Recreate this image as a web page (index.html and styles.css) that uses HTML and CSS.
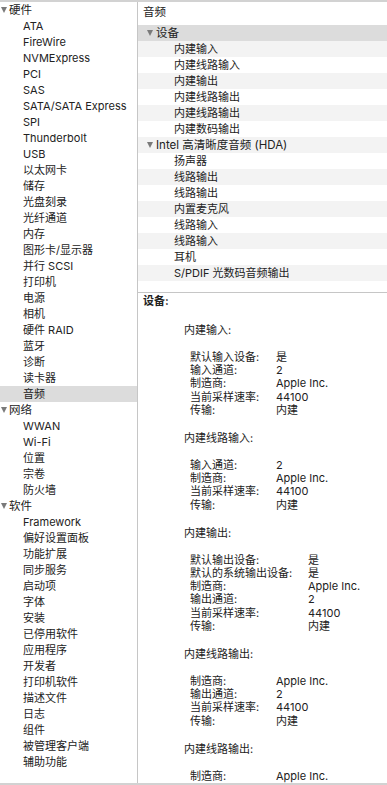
FILE: index.html
```html
<!DOCTYPE html>
<html lang="zh">
<head>
<meta charset="utf-8">
<title>系统信息</title>
<link rel="stylesheet" href="styles.css">
</head>
<body>
<div class="window">
  <nav class="sidebar">
    <div class="row group"><span class="tri"></span>硬件</div>
    <div class="row item">ATA</div>
    <div class="row item">FireWire</div>
    <div class="row item">NVMExpress</div>
    <div class="row item">PCI</div>
    <div class="row item">SAS</div>
    <div class="row item">SATA/SATA Express</div>
    <div class="row item">SPI</div>
    <div class="row item">Thunderbolt</div>
    <div class="row item">USB</div>
    <div class="row item">以太网卡</div>
    <div class="row item">储存</div>
    <div class="row item">光盘刻录</div>
    <div class="row item">光纤通道</div>
    <div class="row item">内存</div>
    <div class="row item">图形卡/显示器</div>
    <div class="row item">并行 SCSI</div>
    <div class="row item">打印机</div>
    <div class="row item">电源</div>
    <div class="row item">相机</div>
    <div class="row item">硬件 RAID</div>
    <div class="row item">蓝牙</div>
    <div class="row item">诊断</div>
    <div class="row item">读卡器</div>
    <div class="row item selected">音频</div>
    <div class="row group"><span class="tri"></span>网络</div>
    <div class="row item">WWAN</div>
    <div class="row item">Wi-Fi</div>
    <div class="row item">位置</div>
    <div class="row item">宗卷</div>
    <div class="row item">防火墙</div>
    <div class="row group"><span class="tri"></span>软件</div>
    <div class="row item">Framework</div>
    <div class="row item">偏好设置面板</div>
    <div class="row item">功能扩展</div>
    <div class="row item">同步服务</div>
    <div class="row item">启动项</div>
    <div class="row item">字体</div>
    <div class="row item">安装</div>
    <div class="row item">已停用软件</div>
    <div class="row item">应用程序</div>
    <div class="row item">开发者</div>
    <div class="row item">打印机软件</div>
    <div class="row item">描述文件</div>
    <div class="row item">日志</div>
    <div class="row item">组件</div>
    <div class="row item">被管理客户端</div>
    <div class="row item">辅助功能</div>
  </nav>
  <main class="main">
    <section class="outline">
      <div class="outline-header">音频</div>
      <div class="orow group selected"><span class="tri"></span>设备</div>
      <div class="orow item">内建输入</div>
      <div class="orow item">内建线路输入</div>
      <div class="orow item">内建输出</div>
      <div class="orow item">内建线路输出</div>
      <div class="orow item">内建线路输出</div>
      <div class="orow item">内建数码输出</div>
      <div class="orow group"><span class="tri"></span>Intel 高清晰度音频 (HDA)</div>
      <div class="orow item">扬声器</div>
      <div class="orow item">线路输出</div>
      <div class="orow item">线路输出</div>
      <div class="orow item">内置麦克风</div>
      <div class="orow item">线路输入</div>
      <div class="orow item">线路输入</div>
      <div class="orow item">耳机</div>
      <div class="orow item">S/PDIF 光数码音频输出</div>
      <div class="orow item"></div>
    </section>
    <section class="detail">
      <div class="detail-title">设备:</div>

      <div class="dev">
        <div class="dev-name">内建输入:</div>
        <dl class="kv">
          <dt>默认输入设备:</dt><dd>是</dd>
          <dt>输入通道:</dt><dd>2</dd>
          <dt>制造商:</dt><dd>Apple Inc.</dd>
          <dt>当前采样速率:</dt><dd>44100</dd>
          <dt>传输:</dt><dd>内建</dd>
        </dl>
      </div>

      <div class="dev">
        <div class="dev-name">内建线路输入:</div>
        <dl class="kv">
          <dt>输入通道:</dt><dd>2</dd>
          <dt>制造商:</dt><dd>Apple Inc.</dd>
          <dt>当前采样速率:</dt><dd>44100</dd>
          <dt>传输:</dt><dd>内建</dd>
        </dl>
      </div>

      <div class="dev">
        <div class="dev-name">内建输出:</div>
        <dl class="kv wide">
          <dt>默认输出设备:</dt><dd>是</dd>
          <dt>默认的系统输出设备:</dt><dd>是</dd>
          <dt>制造商:</dt><dd>Apple Inc.</dd>
          <dt>输出通道:</dt><dd>2</dd>
          <dt>当前采样速率:</dt><dd>44100</dd>
          <dt>传输:</dt><dd>内建</dd>
        </dl>
      </div>

      <div class="dev">
        <div class="dev-name">内建线路输出:</div>
        <dl class="kv">
          <dt>制造商:</dt><dd>Apple Inc.</dd>
          <dt>输出通道:</dt><dd>2</dd>
          <dt>当前采样速率:</dt><dd>44100</dd>
          <dt>传输:</dt><dd>内建</dd>
        </dl>
      </div>

      <div class="dev">
        <div class="dev-name">内建线路输出:</div>
        <dl class="kv">
          <dt>制造商:</dt><dd>Apple Inc.</dd>
        </dl>
      </div>
    </section>
  </main>
</div>
</body>
</html>
```

FILE: styles.css
```css
html, body {
  margin: 0;
  padding: 0;
  background: #ffffff;
}

body {
  font-family: Inter, "Noto Sans CJK SC", sans-serif;
  font-size: 11px;
  color: #222222;
  overflow: hidden;
}

.window {
  box-sizing: border-box;
  height: 785px;
  display: flex;
  border-top: 2px solid #d2d2d2;
  border-bottom: 2px solid #d2d2d2;
  overflow: hidden;
}

/* ---------- sidebar ---------- */
.sidebar {
  width: 137px;
  flex: none;
  border-right: 1px solid #c6c6c6;
}

.row {
  height: 16px;
  line-height: 16px;
  white-space: nowrap;
}

.row.group {
  padding-left: 1px;
  font-size: 11.5px;
}

.row.item {
  padding-left: 23px;
}

.row.selected {
  background: #dcdcdc;
}

.tri {
  display: inline-block;
  width: 0;
  height: 0;
  border-left: 3px solid transparent;
  border-right: 3px solid transparent;
  border-top: 6px solid #7a7a7a;
  margin-right: 2px;
  vertical-align: 1px;
}

/* ---------- main ---------- */
.main {
  flex: 1;
  display: flex;
  flex-direction: column;
  min-width: 0;
}

.outline {
  height: 290px;
  flex: none;
  overflow: hidden;
  border-bottom: 1px solid #c6c6c6;
}

.outline-header {
  height: 23px;
  line-height: 21px;
  padding-left: 5px;
  font-size: 11.5px;
}

.orow {
  height: 16px;
  line-height: 16px;
  white-space: nowrap;
}

.orow:nth-child(odd) {
  background: #f3f3f3;
}

.orow.group {
  padding-left: 9px;
  font-size: 11.5px;
}

.orow.group .tri {
  margin-right: 3px;
}

.orow.item {
  padding-left: 36px;
}

.orow.selected {
  background: #dcdcdc;
}

/* ---------- detail ---------- */
.detail {
  flex: 1;
  padding: 1px 0 0 5px;
  overflow: hidden;
}

.detail-title {
  font-weight: bold;
  line-height: 14px;
  margin-bottom: 15px;
}

.dev {
  padding-left: 41px;
  margin-bottom: 14px;
}

.dev-name {
  line-height: 14px;
  margin-bottom: 14px;
}

.kv {
  display: grid;
  grid-template-columns: 86px auto;
  margin: 0;
  padding-left: 6px;
  line-height: 13.2px;
}

.kv.wide {
  grid-template-columns: 118px auto;
}

.kv dt,
.kv dd {
  margin: 0;
  white-space: nowrap;
}
```
